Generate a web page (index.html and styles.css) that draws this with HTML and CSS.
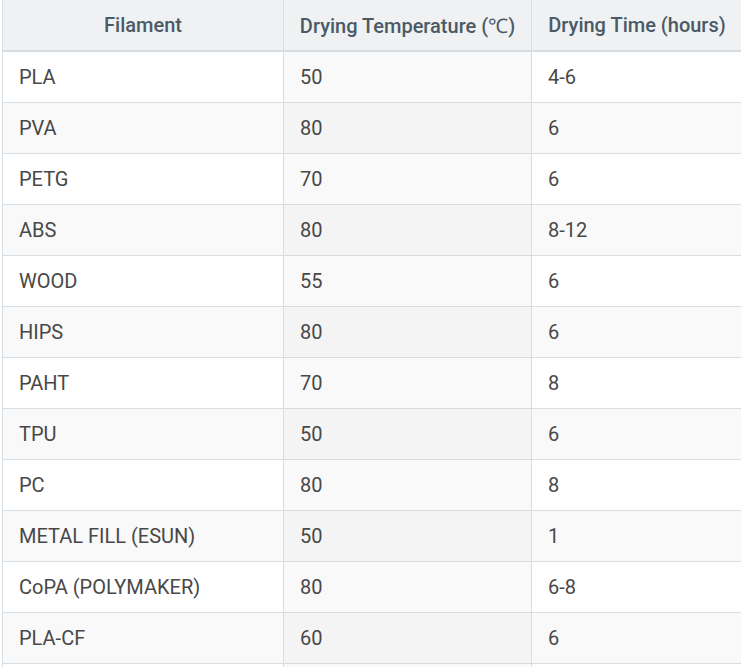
FILE: index.html
```html
<!DOCTYPE html>
<html>
<head>
<meta charset="utf-8">
<link rel="stylesheet" href="styles.css">
</head>
<body>
<table class="dry-table">
  <thead>
    <tr>
      <th class="c1">Filament</th>
      <th class="c2">Drying Temperature (℃)</th>
      <th class="c3">Drying Time (hours)</th>
    </tr>
  </thead>
  <tbody>
    <tr><td>PLA</td><td>50</td><td>4-6</td></tr>
    <tr><td>PVA</td><td>80</td><td>6</td></tr>
    <tr><td>PETG</td><td>70</td><td>6</td></tr>
    <tr><td>ABS</td><td>80</td><td>8-12</td></tr>
    <tr><td>WOOD</td><td>55</td><td>6</td></tr>
    <tr><td>HIPS</td><td>80</td><td>6</td></tr>
    <tr><td>PAHT</td><td>70</td><td>8</td></tr>
    <tr><td>TPU</td><td>50</td><td>6</td></tr>
    <tr><td>PC</td><td>80</td><td>8</td></tr>
    <tr><td>METAL FILL (ESUN)</td><td>50</td><td>1</td></tr>
    <tr><td>CoPA (POLYMAKER)</td><td>80</td><td>6-8</td></tr>
    <tr><td>PLA-CF</td><td>60</td><td>6</td></tr>
    <tr class="tail"><td></td><td></td><td></td></tr>
  </tbody>
</table>
</body>
</html>
```
FILE: styles.css
```css
html, body {
  margin: 0;
  padding: 0;
  background: #ffffff;
  overflow: hidden;
}
body {
  font-family: Roboto, "Liberation Sans", sans-serif;
}
.dry-table {
  margin-left: 2px;
  border-collapse: collapse;
  table-layout: fixed;
  width: 741px;
  font-size: 20px;
}
.dry-table th, .dry-table td {
  border: 1px solid #d7dee3;
  padding: 0 0 0 16px;
  text-align: left;
}
.dry-table th {
  height: 50px;
  background: #eff1f3;
  color: #4b5a66;
  font-weight: 500;
  text-align: center;
  padding: 0;
  border-top: none;
  border-bottom: 2px solid #d7dee3;
}
.dry-table td {
  height: 50px;
  color: #484848;
}
.dry-table .c1 { width: 280px; }
.dry-table .c2 { width: 247px; }
.dry-table tbody tr:nth-child(even) td { background: #f9f9f9; }
.dry-table tbody td:nth-child(2) { background: #f9f9f9; }
.dry-table tbody tr:nth-child(even) td:nth-child(2) { background: #f4f4f4; }
```
